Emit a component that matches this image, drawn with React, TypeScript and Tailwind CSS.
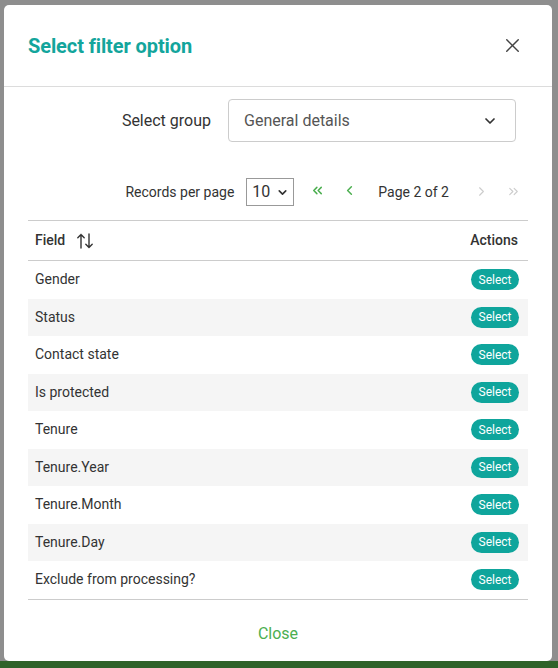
import React from 'react';
import { X, ChevronDown, ChevronsLeft, ChevronLeft, ChevronRight, ChevronsRight } from 'lucide-react';

const fields = [
  'Gender',
  'Status',
  'Contact state',
  'Is protected',
  'Tenure',
  'Tenure.Year',
  'Tenure.Month',
  'Tenure.Day',
  'Exclude from processing?',
];

const SortIcon = () => (
  <svg width="18" height="18" viewBox="0 0 18 18" fill="none" stroke="#333" strokeWidth="1.4" strokeLinecap="round">
    <path d="M5 16V2.5M1.8 5.7L5 2.5l3.2 3.2" />
    <path d="M13 2v13.5M9.8 12.3l3.2 3.2 3.2-3.2" />
  </svg>
);

const App: React.FC = () => {
  return (
    <div className="relative w-[558px] h-[668px] overflow-hidden bg-[#8e8e8e] flex flex-col font-['Roboto',sans-serif]">
      {/* Page behind the overlay */}
      <div className="flex-1" />
      <div className="h-[7px] bg-[#2f6229]" />

      {/* Modal */}
      <div className="absolute left-[4px] top-[5px] w-[548px] h-[656px] bg-white rounded-[5px] flex flex-col">
        {/* Header */}
        <div className="h-[82px] flex items-center justify-between px-6 border-b border-[#dcdcdc]">
          <h2 className="text-[20px] font-bold text-[#13a59c] tracking-[-0.1px] pt-[1px]">Select filter option</h2>
          <button className="mr-[4px] text-[#444]">
            <X size={23} strokeWidth={1.5} />
          </button>
        </div>

        {/* Body */}
        <div className="px-6 flex flex-col">
          <div className="flex items-center mt-[12px]">
            <span className="flex-1 text-right pr-[17px] text-[16px] text-[#333]">Select group</span>
            <div className="w-[288px] h-[43px] mr-[12px] border border-[#cccccc] rounded-[4px] flex items-center justify-between pl-[15px] pr-[17px]">
              <span className="text-[16px] text-[#555]">General details</span>
              <ChevronDown size={16} strokeWidth={2.6} className="text-[#333]" />
            </div>
          </div>

          <div className="flex items-center justify-end mt-[36px] pr-[7px] text-[14px] text-[#333]">
            <span>Records per page</span>
            <div className="ml-[12px] w-[48px] h-[28px] border border-[#999] flex items-center justify-between pl-[5px] pr-[4px]">
              <span className="text-[16px]">10</span>
              <ChevronDown size={13} strokeWidth={3} />
            </div>
            <ChevronsLeft size={15} strokeWidth={2.4} className="ml-[16px] text-[#4caf50] -mt-[4px]" />
            <ChevronLeft size={15} strokeWidth={2.4} className="ml-[17px] text-[#4caf50] -mt-[4px]" />
            <span className="ml-[21px]">Page 2 of 2</span>
            <ChevronRight size={15} strokeWidth={1.8} className="ml-[25px] text-[#cccccc] -mt-[2px]" />
            <ChevronsRight size={15} strokeWidth={1.8} className="ml-[17px] text-[#cccccc] -mt-[2px]" />
          </div>

          {/* Table */}
          <div className="mt-[14px] border-t border-b border-[#cccccc]">
            <div className="h-[40px] flex items-center justify-between pl-[7px] pr-[10px] border-b border-[#cccccc] text-[14px] font-medium text-[#333]">
              <div className="flex items-center gap-[11px]">
                <span>Field</span>
                <SortIcon />
              </div>
              <span>Actions</span>
            </div>
            {fields.map((f, i) => (
              <div
                key={f}
                className={`h-[37.5px] flex items-center justify-between pl-[7px] pr-[9px] text-[14px] text-[#333] ${i % 2 === 1 ? 'bg-[#f5f5f5]' : 'bg-white'}`}
              >
                <span>{f}</span>
                <span className="h-[21px] w-[48px] rounded-full bg-[#0fa59c] text-white text-[12px] flex items-center justify-center">
                  Select
                </span>
              </div>
            ))}
          </div>
        </div>

        {/* Footer */}
        <div className="flex-1 flex items-center justify-center pt-[8px]">
          <button className="text-[16px] text-[#4caf50]">Close</button>
        </div>
      </div>
    </div>
  );
};

export default App;
